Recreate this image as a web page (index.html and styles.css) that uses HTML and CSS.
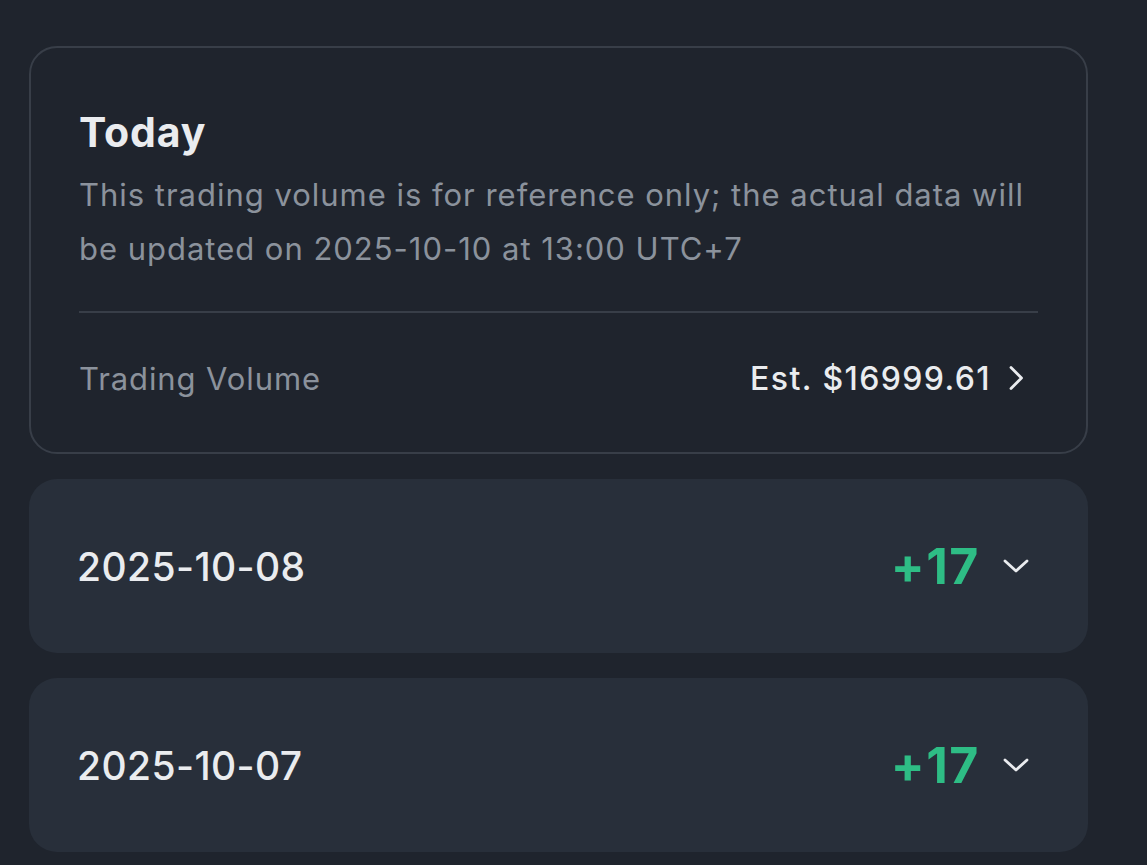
FILE: index.html
```html
<!DOCTYPE html>
<html>
<head>
<meta charset="utf-8">
<link rel="stylesheet" href="styles.css">
</head>
<body>
<main class="page">
  <section class="today-card">
    <h2 class="today-title">Today</h2>
    <p class="today-desc">This trading volume is for reference only; the actual data will be updated on 2025-10-10 at 13:00 UTC+7</p>
    <div class="divider"></div>
    <div class="volume-row">
      <span class="volume-label">Trading Volume</span>
      <span class="volume-value">Est. $16999.61
        <svg class="chev-right" width="20" height="28" viewBox="0 0 20 28"><path d="M5 3.5 L15.5 14 L5 24.5" fill="none" stroke="#eaecef" stroke-width="2.8" stroke-linecap="round" stroke-linejoin="round"/></svg>
      </span>
    </div>
  </section>
  <section class="day-card">
    <span class="day-date">2025-10-08</span>
    <span class="day-right"><span class="day-delta">+17</span>
      <svg class="chev-down" width="28" height="20" viewBox="0 0 28 20"><path d="M3 5 L14 15 L25 5" fill="none" stroke="#eaecef" stroke-width="2.8" stroke-linecap="round" stroke-linejoin="round"/></svg>
    </span>
  </section>
  <section class="day-card">
    <span class="day-date">2025-10-07</span>
    <span class="day-right"><span class="day-delta">+17</span>
      <svg class="chev-down" width="28" height="20" viewBox="0 0 28 20"><path d="M3 5 L14 15 L25 5" fill="none" stroke="#eaecef" stroke-width="2.8" stroke-linecap="round" stroke-linejoin="round"/></svg>
    </span>
  </section>
</main>
</body>
</html>
```
FILE: styles.css
```css
html, body {
  margin: 0;
  padding: 0;
  background: #1f242d;
  font-family: "Inter", "Open Sans", sans-serif;
}
.page {
  padding: 46px 59px 0 29px;
  display: flex;
  flex-direction: column;
  gap: 25px;
}
.today-card {
  border: 2px solid #383e48;
  border-radius: 28px;
  padding: 59px 48px 54px 48px;
  background: #1f242d;
}
.today-title {
  margin: 0;
  color: #eaecef;
  font-size: 41px;
  font-weight: 700;
  line-height: 50px;
  letter-spacing: 0.9px;
}
.today-desc {
  margin: 11px 0 0 0;
  color: #8b929c;
  font-size: 31px;
  line-height: 54px;
  letter-spacing: 0.98px;
}
.divider {
  height: 2px;
  background: #383e48;
  margin-top: 35px;
}
.volume-row {
  display: flex;
  justify-content: space-between;
  align-items: center;
  margin-top: 45px;
  height: 40px;
  padding-right: 12px;
}
.volume-label {
  color: #8b929c;
  font-size: 31px;
  letter-spacing: 0.9px;
}
.volume-value {
  color: #eaecef;
  font-size: 32px;
  font-weight: 500;
  display: flex;
  align-items: center;
  gap: 15px;
  letter-spacing: 1.4px;
}
.day-card {
  background: #282f3a;
  border-radius: 28px;
  height: 174px;
  padding: 0 58px 0 48px;
  display: flex;
  justify-content: space-between;
  align-items: center;
}
.day-date {
  color: #eaecef;
  font-size: 39px;
  font-weight: 500;
  letter-spacing: 0.4px;
}
.day-right {
  display: flex;
  align-items: center;
  gap: 22px;
}
.day-delta {
  color: #2ebd85;
  font-size: 50px;
  font-weight: 700;
  letter-spacing: 1.6px;
}
```
